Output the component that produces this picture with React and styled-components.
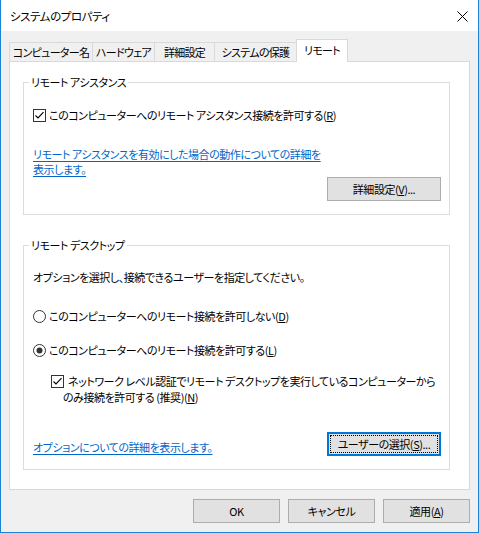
import React from 'react';
import styled, { createGlobalStyle } from 'styled-components';

const Global = createGlobalStyle`
  html, body { margin: 0; padding: 0; background: #fff; }
  body {
    font-family: "Noto Sans CJK JP", "Noto Sans", sans-serif;
    font-size: 11px;
    color: #000;
  }
  #root { width: 479px; height: 533px; }
`;

const Window = styled.div`
  width: 479px;
  height: 533px;
  box-sizing: border-box;
  border: 1px solid #1883d7;
  border-top: none;
  display: flex;
  flex-direction: column;
  background: #f0f0f0;
  font-size: 11px;
  letter-spacing: -0.45px;
  font-feature-settings: "palt";
  line-height: 16px;
`;

const TitleBar = styled.div`
  height: 31px;
  flex: none;
  background: #fff;
  display: flex;
  align-items: center;
  justify-content: space-between;
  padding: 1px 10px 0 9px;
  box-sizing: border-box;
`;

const Title = styled.span`
  font-size: 11.5px;
`;

const CloseIcon = () => (
  <svg width="11" height="11" viewBox="0 0 11 11">
    <path d="M0.5 0.5 L10.5 10.5 M10.5 0.5 L0.5 10.5" stroke="#000" strokeWidth="1" fill="none" />
  </svg>
);

const Body = styled.div`
  flex: 1;
  display: flex;
  flex-direction: column;
  padding: 8px 7px 0 8px;
`;

const TabRow = styled.div`
  display: flex;
  align-items: flex-end;
  height: 23px;
  position: relative;
  z-index: 1;
`;

const Tab = styled.div`
  box-sizing: border-box;
  width: ${p => p.$w}px;
  height: ${p => (p.$active ? 23 : 20)}px;
  margin-left: ${p => (p.$first ? 0 : -1)}px;
  border: 1px solid #d9d9d9;
  border-bottom: ${p => (p.$active ? 'none' : '1px solid #d9d9d9')};
  background: ${p => (p.$active ? '#fff' : '#f0f0f0')};
  display: flex;
  align-items: center;
  justify-content: center;
  padding-bottom: ${p => (p.$active ? 3 : 0)}px;
  white-space: nowrap;
  letter-spacing: -0.7px;
`;

const Panel = styled.div`
  width: 461px;
  height: 429px;
  box-sizing: border-box;
  margin-top: -1px;
  background: #fff;
  border: 1px solid #d9d9d9;
  padding: 12px 0 0 13px;
  display: flex;
  flex-direction: column;
`;

const Group = styled.fieldset`
  margin: ${p => p.$top || 0}px 0 0 0;
  min-width: 0;
  width: 427px;
  box-sizing: border-box;
  border: 1px solid #dcdcdc;
  padding: 0 8px 13px 9px;
  display: flex;
  flex-direction: column;
`;

const Legend = styled.legend`
  padding: 0 2px;
  margin-left: -4px;
  height: 16px;
  line-height: 16px;
`;

const Row = styled.div`
  display: flex;
  align-items: ${p => (p.$multi ? 'flex-start' : 'center')};
  margin-top: ${p => p.$mt || 0}px;
  margin-left: ${p => p.$indent || 0}px;
  min-height: 16px;
`;

const Indicator = styled.span`
  flex: none;
  width: 13px;
  height: 13px;
  display: block;
  margin-top: ${p => (p.$multi ? 2 : 0)}px;
`;

const Label = styled.span`
  margin-left: ${p => (p.$hang ? -1 : 3)}px;
  text-indent: ${p => (p.$hang ? 5 : 0)}px;
  white-space: nowrap;
  display: block;
`;

const Text = styled.div`
  margin-top: ${p => p.$mt || 0}px;
  white-space: nowrap;
`;

const Link = styled.a`
  display: block;
  color: #0066cc;
  text-decoration: underline;
  text-underline-offset: 2px;
  line-height: 15px;
  margin-top: ${p => p.$mt || 0}px;
  white-space: nowrap;
  cursor: pointer;
  position: relative;
  top: ${p => p.$shift || 0}px;
`;

const ButtonRow = styled.div`
  display: flex;
  align-items: center;
  justify-content: ${p => p.$spread ? 'space-between' : 'flex-end'};
  margin-top: ${p => p.$mt || 0}px;
`;

const Button = styled.button`
  font: inherit;
  letter-spacing: inherit;
  font-feature-settings: "palt";
  color: #000;
  box-sizing: border-box;
  width: ${p => p.$w || 86}px;
  height: 24px;
  padding: 0;
  background: #e1e1e1;
  border: ${p => (p.$focus ? '2px solid #0078d7' : '1px solid #adadad')};
  display: flex;
  align-items: center;
  justify-content: center;
  position: relative;
  line-height: 16px;
  &::after {
    content: ${p => (p.$focus ? '""' : 'none')};
    position: absolute;
    inset: 1px;
    border: 1px dotted #000;
  }
`;

const Footer = styled.div`
  display: flex;
  justify-content: flex-end;
  gap: 8px;
  margin-top: 9px;
  padding-right: 1px;
`;

const CheckBox = ({ multi }) => (
  <Indicator $multi={multi}>
    <svg width="13" height="13" viewBox="0 0 13 13">
      <rect x="0.5" y="0.5" width="12" height="12" fill="#fff" stroke="#333" />
      <path d="M2.5 6.5 L5 9 L10.5 3.2" stroke="#000" strokeWidth="1.1" fill="none" />
    </svg>
  </Indicator>
);

const Radio = ({ checked }) => (
  <Indicator>
    <svg width="13" height="13" viewBox="0 0 13 13">
      <circle cx="6.5" cy="6.5" r="6" fill="#fff" stroke="#333" />
      {checked && <circle cx="6.5" cy="6.5" r="3" fill="#333" />}
    </svg>
  </Indicator>
);

export default function App() {
  return (
    <>
      <Global />
      <Window>
        <TitleBar>
          <Title>システムのプロパティ</Title>
          <CloseIcon />
        </TitleBar>
        <Body>
          <TabRow>
            <Tab $first $w={84}>コンピューター名</Tab>
            <Tab $w={63}>ハードウェア</Tab>
            <Tab $w={61}>詳細設定</Tab>
            <Tab $w={83}>システムの保護</Tab>
            <Tab $active $w={52}>リモート</Tab>
          </TabRow>
          <Panel>
            <Group>
              <Legend>リモート アシスタンス</Legend>
              <Row $mt={17}>
                <CheckBox />
                <Label>このコンピューターへのリモート アシスタンス接続を許可する(<u>R</u>)</Label>
              </Row>
              <Link $mt={24}>
                リモート アシスタンスを有効にした場合の動作についての詳細を
                <br />
                表示します。
              </Link>
              <ButtonRow>
                <Button $w={114}>詳細設定(<u>V</u>)...</Button>
              </ButtonRow>
            </Group>
            <Group $top={22}>
              <Legend>リモート デスクトップ</Legend>
              <Text $mt={16}>オプションを選択し、接続できるユーザーを指定してください。</Text>
              <Row $mt={23}>
                <Radio />
                <Label>このコンピューターへのリモート接続を許可しない(<u>D</u>)</Label>
              </Row>
              <Row $mt={18}>
                <Radio checked />
                <Label>このコンピューターへのリモート接続を許可する(<u>L</u>)</Label>
              </Row>
              <Row $mt={15} $indent={18} $multi>
                <CheckBox multi />
                <Label $hang>
                  ネットワーク レベル認証でリモート デスクトップを実行しているコンピューターから
                  <br />
                  のみ接続を許可する (推奨)(<u>N</u>)
                </Label>
              </Row>
              <ButtonRow $spread $mt={27}>
                <Link $shift={3}>オプションについての詳細を表示します。</Link>
                <Button $focus $w={114}>ユーザーの選択(<u>S</u>)...</Button>
              </ButtonRow>
            </Group>
          </Panel>
          <Footer>
            <Button $w={87}>OK</Button>
            <Button $w={87}>キャンセル</Button>
            <Button $w={87}>適用(<u>A</u>)</Button>
          </Footer>
        </Body>
      </Window>
    </>
  );
}
